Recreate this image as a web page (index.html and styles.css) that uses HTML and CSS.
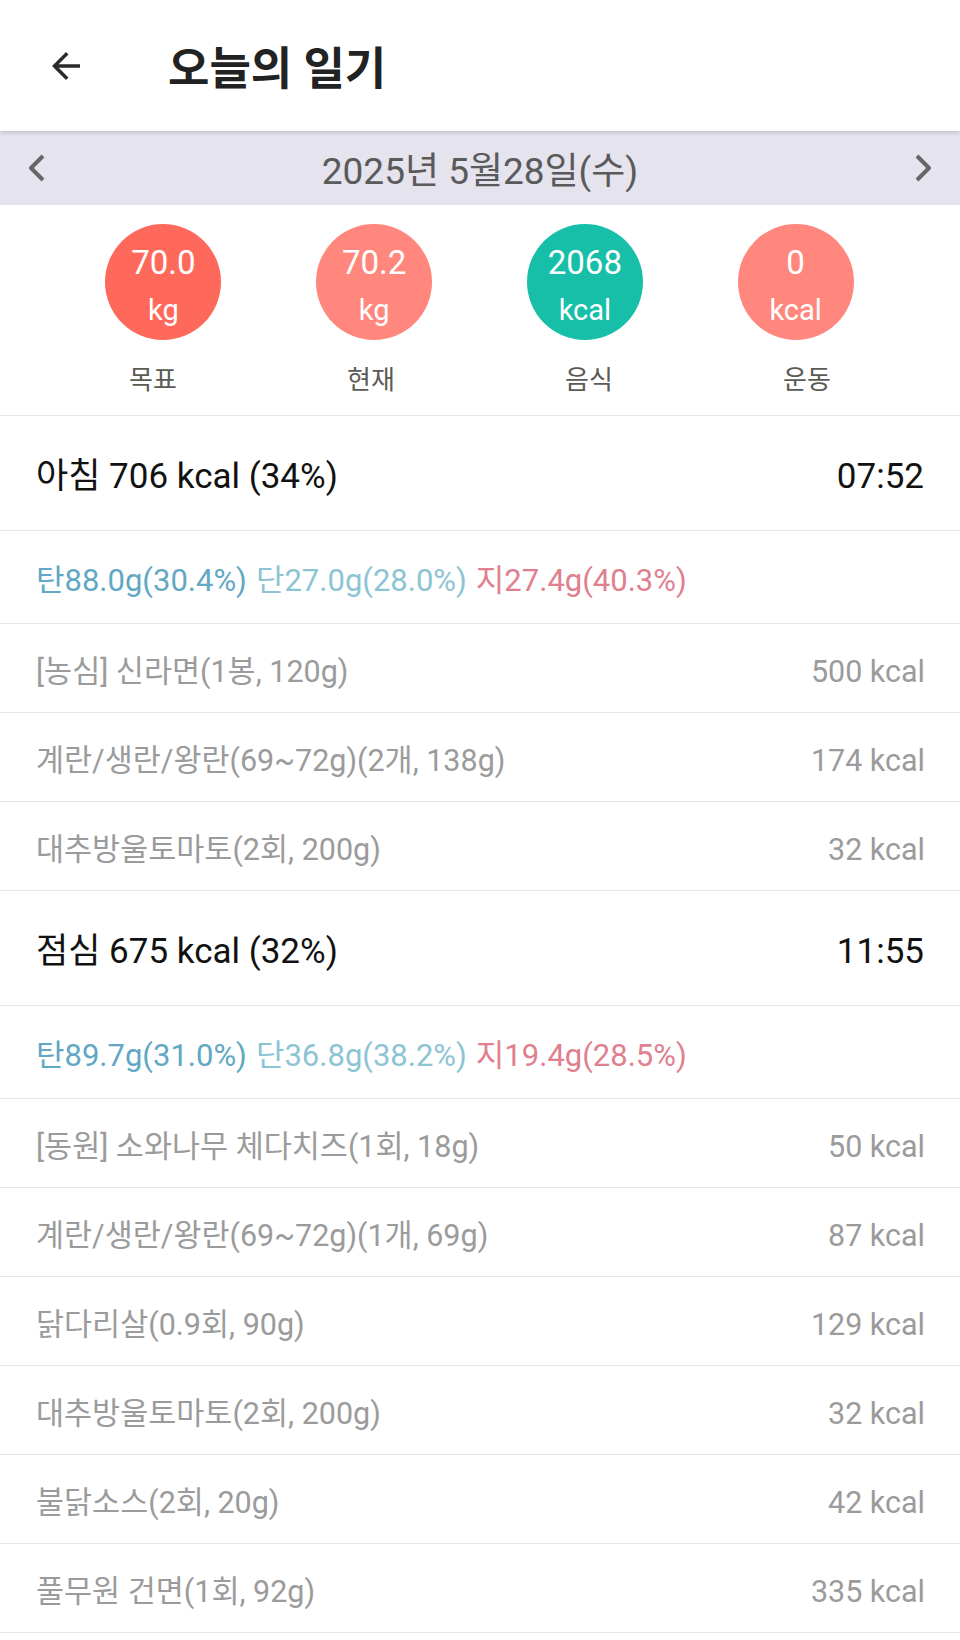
FILE: index.html
```html
<!DOCTYPE html>
<html lang="ko">
<head>
    <meta charset="UTF-8">
    <meta name="viewport" content="width=device-width, initial-scale=1.0">
    <title>오늘의 일기</title>
    <link rel="stylesheet" href="styles.css">
</head>
<body>
    <div class="header">
        <svg class="back" viewBox="0 0 24 24" width="42" height="42">
            <path d="M20 11H7.83l5.59-5.59L12 4l-8 8 8 8 1.41-1.41L7.83 13H20v-2z" fill="#2b2b2b"/>
        </svg>
        <h1>오늘의 일기</h1>
    </div>

    <div class="datebar">
        <svg class="chev" viewBox="0 0 20 30" width="20" height="30">
            <polyline points="16,3 4,15 16,27" fill="none" stroke="#666" stroke-width="4" stroke-linejoin="round"/>
        </svg>
        <span class="date">2025년 5월28일(수)</span>
        <svg class="chev" viewBox="0 0 20 30" width="20" height="30">
            <polyline points="4,3 16,15 4,27" fill="none" stroke="#666" stroke-width="4" stroke-linejoin="round"/>
        </svg>
    </div>

    <div class="stats">
        <div class="circles">
            <div class="cell"><div class="circle goal"><span class="num">70.0</span><span class="unit">kg</span></div></div>
            <div class="cell"><div class="circle now"><span class="num">70.2</span><span class="unit">kg</span></div></div>
            <div class="cell"><div class="circle food"><span class="num">2068</span><span class="unit">kcal</span></div></div>
            <div class="cell"><div class="circle now"><span class="num">0</span><span class="unit">kcal</span></div></div>
        </div>
        <div class="labels">
            <span>목표</span>
            <span>현재</span>
            <span>음식</span>
            <span>운동</span>
        </div>
    </div>

    <div class="meal">
        <span>아침 706 kcal (34%)</span>
        <span>07:52</span>
    </div>
    <div class="macro">
        <span class="carb">탄88.0g(30.4%)</span>
        <span class="prot">단27.0g(28.0%)</span>
        <span class="fat">지27.4g(40.3%)</span>
    </div>
    <div class="item"><span>[농심] 신라면(1봉, 120g)</span><span>500 kcal</span></div>
    <div class="item"><span>계란/생란/왕란(69~72g)(2개, 138g)</span><span>174 kcal</span></div>
    <div class="item"><span>대추방울토마토(2회, 200g)</span><span>32 kcal</span></div>

    <div class="meal">
        <span>점심 675 kcal (32%)</span>
        <span>11:55</span>
    </div>
    <div class="macro">
        <span class="carb">탄89.7g(31.0%)</span>
        <span class="prot">단36.8g(38.2%)</span>
        <span class="fat">지19.4g(28.5%)</span>
    </div>
    <div class="item"><span>[동원] 소와나무 체다치즈(1회, 18g)</span><span>50 kcal</span></div>
    <div class="item"><span>계란/생란/왕란(69~72g)(1개, 69g)</span><span>87 kcal</span></div>
    <div class="item"><span>닭다리살(0.9회, 90g)</span><span>129 kcal</span></div>
    <div class="item"><span>대추방울토마토(2회, 200g)</span><span>32 kcal</span></div>
    <div class="item"><span>불닭소스(2회, 20g)</span><span>42 kcal</span></div>
    <div class="item"><span>풀무원 건면(1회, 92g)</span><span>335 kcal</span></div>
</body>
</html>
```

FILE: styles.css
```css
body {
    margin: 0;
    font-family: Roboto, "Noto Sans CJK KR", sans-serif;
    background: #fff;
    overflow: hidden;
}
.header {
    position: relative;
    z-index: 1;
    height: 131px;
    display: flex;
    align-items: center;
    padding-left: 45px;
    background: #fff;
    box-shadow: 0 2px 4px rgba(0, 0, 0, 0.15);
}
.header h1 {
    margin: 0 0 0 81px;
    font-size: 45px;
    font-weight: 700;
    color: #222;
}
.datebar {
    height: 74px;
    display: flex;
    align-items: center;
    justify-content: space-between;
    padding: 0 27px;
    background: #e4e3ee;
}
.date {
    font-size: 37px;
    color: #5a5a5a;
}
.stats {
    padding: 19px 0 20px;
    border-bottom: 1px solid #e6e6e6;
}
.circles {
    display: flex;
    padding: 0 59px 0 58px;
}
.cell {
    flex: 1;
    display: flex;
    justify-content: center;
}
.circle {
    width: 116px;
    height: 116px;
    border-radius: 50%;
    display: flex;
    flex-direction: column;
    align-items: center;
    justify-content: center;
    gap: 13px;
    color: #fff;
}
.circle .num {
    font-size: 33px;
    line-height: 36px;
    margin-top: 7px;
}
.circle .unit {
    font-size: 29px;
    line-height: 32px;
}
.goal {
    background: #ff695c;
}
.now {
    background: #ff877d;
}
.food {
    background: #18bfa8;
}
.labels {
    display: flex;
    padding: 0 44px;
    margin-top: 25px;
}
.labels span {
    flex: 1;
    text-align: center;
    font-size: 26px;
    line-height: 30px;
    color: #5b5b55;
}
.meal {
    height: 106px;
    display: flex;
    align-items: center;
    justify-content: space-between;
    padding: 8px 36px 0;
    border-bottom: 1px solid #e6e6e6;
    font-size: 35px;
    line-height: 48px;
    color: #111;
}
.macro {
    height: 92px;
    display: flex;
    align-items: center;
    gap: 9px;
    padding: 0 36px;
    border-bottom: 1px solid #e6e6e6;
    font-size: 31px;
}
.carb {
    color: #62a7c3;
}
.prot {
    color: #8dc4d4;
}
.fat {
    color: #e0808f;
}
.item {
    height: 80px;
    display: flex;
    align-items: center;
    justify-content: space-between;
    padding: 8px 35px 0 36px;
    border-bottom: 1px solid #e6e6e6;
    font-size: 30.5px;
    line-height: 44px;
    color: #9b9b9b;
}
```
